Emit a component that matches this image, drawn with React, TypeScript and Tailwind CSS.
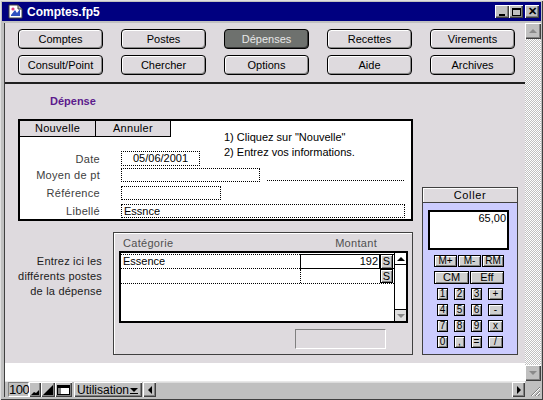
import React from 'react'

const navTop = ['Comptes', 'Postes', 'Dépenses', 'Recettes', 'Virements']
const navBottom = ['Consult/Point', 'Chercher', 'Options', 'Aide', 'Archives']

const raised = 'bg-[#c0c0c0] shadow-[inset_1px_1px_0_#ffffff,inset_-1px_-1px_0_#404040,inset_-2px_-2px_0_#808080]'

function NavButton({ label, active }: { label: string; active?: boolean }) {
  return (
    <div
      className={`h-[20px] rounded-[4px] border border-black flex items-center justify-center text-[11px] ${
        active
          ? 'bg-[#6e716e] text-[#e8e8e8] shadow-[inset_-1px_-1px_0_#383838]'
          : 'bg-[#dedade] text-black shadow-[inset_1px_1px_0_#ffffff,inset_-1px_-1px_0_#8a8a8a]'
      }`}
    >
      {label}
    </div>
  )
}

function Field({ label, children, className = '' }: { label: string; children: React.ReactNode; className?: string }) {
  return (
    <div className={`flex items-center ${className}`}>
      <div className="w-[80px] text-right text-[#404040] tracking-[0.3px] leading-[14px]">{label}</div>
      <div className="ml-[21px] flex items-center">{children}</div>
    </div>
  )
}

function CalcKey({ label, className = '' }: { label: string; className?: string }) {
  return (
    <div
      className={`h-[12px] border border-black bg-[#d0d0d0] shadow-[inset_1px_1px_0_#ffffff,inset_-1px_-1px_0_#808080] flex items-center justify-center text-[10px] leading-none ${className}`}
    >
      {label}
    </div>
  )
}

function Tri({ dir, color = '#000', size = 7 }: { dir: 'up' | 'down' | 'left' | 'right'; color?: string; size?: number }) {
  const pts = {
    up: '0,6 6,0 12,6',
    down: '0,0 12,0 6,6',
    left: '6,0 6,12 0,6',
    right: '0,0 0,12 6,6',
  }[dir]
  const vb = dir === 'up' || dir === 'down' ? '0 0 12 6' : '0 0 6 12'
  const w = dir === 'up' || dir === 'down' ? size : size / 2
  const h = dir === 'up' || dir === 'down' ? size / 2 : size
  return (
    <svg width={w} height={h} viewBox={vb}>
      <polygon points={pts} fill={color} />
    </svg>
  )
}

function TitleIcon() {
  return (
    <svg width="16" height="15" viewBox="0 0 16 15">
      <path d="M1 1h9l4 4v9H1z" fill="#fff" stroke="#404040" strokeWidth="1" />
      <path d="M10 1v4h4" fill="#c0c0c0" stroke="#404040" strokeWidth="1" />
      <path d="M3 11l4-5 2 3 3-4v7H3z" fill="#3050c0" />
      <circle cx="5" cy="5" r="1.6" fill="#e04080" />
    </svg>
  )
}

function WinButton({ children }: { children: React.ReactNode }) {
  return <div className={`w-[14px] h-[13px] ${raised} flex items-center justify-center`}>{children}</div>
}

export default function App() {
  return (
    <div className="w-[543px] h-[400px] bg-[#c0c0c0] shadow-[inset_1px_1px_0_#e0e0e0,inset_-1px_-1px_0_#404040] px-[2px] pt-[2px] pb-[3px] flex flex-col overflow-hidden font-['Liberation_Sans',Arial,sans-serif] text-[11px] text-black">
      {/* barre de titre */}
      <div className="h-[19px] bg-[#000080] flex items-center pl-[6px] pr-[2px]">
        <TitleIcon />
        <span className="ml-[3px] text-white font-bold text-[12px]">Comptes.fp5</span>
        <div className="ml-auto flex items-center">
          <WinButton>
            <div className="w-[6px] h-[2px] bg-black mt-[6px]" />
          </WinButton>
          <WinButton>
            <div className="w-[9px] h-[8px] border border-black border-t-2" />
          </WinButton>
          <div className="ml-[2px]">
            <WinButton>
              <span className="text-[11px] font-bold leading-none">✕</span>
            </WinButton>
          </div>
        </div>
      </div>

      <div className="mt-[2px] flex-1 flex pl-[2px]">
        <div className="flex-1 flex flex-col border-l border-[#404040]">
          {/* zone grise du modèle */}
          <div className="h-[340px] bg-[#dedade] flex flex-col">
            <div className="mt-[6px] ml-[13px] grid grid-cols-[repeat(5,85px)] gap-x-[18px] gap-y-[6px]">
              {navTop.map((n) => (
                <NavButton key={n} label={n} active={n === 'Dépenses'} />
              ))}
              {navBottom.map((n) => (
                <NavButton key={n} label={n} />
              ))}
            </div>

            <div className="mt-[7px] h-[2px] bg-[#202020]" />

            <div className="mt-[10px] ml-[45px] leading-[14px] font-bold text-[#5c1a8c]">Dépense</div>

            <div className="mt-[11px] ml-[13px] flex">
              {/* colonne gauche */}
              <div className="w-[395px] flex flex-col">
                <div className="h-[102px] border-2 border-black bg-white flex flex-col">
                  <div className="flex">
                    <div className="w-[180px] flex flex-col">
                      <div className="flex h-[16px]">
                        <div className="w-[76px] bg-[#dedade] border-r border-b border-black flex items-center justify-center tracking-[0.3px]">
                          Nouvelle
                        </div>
                        <div className="w-[75px] bg-[#dedade] border-r border-b border-black flex items-center justify-center tracking-[0.3px]">
                          Annuler
                        </div>
                      </div>
                      <Field label="Date" className="mt-[14px]">
                        <div className="w-[79px] h-[15px] border border-dotted border-black flex items-center justify-center leading-none">
                          05/06/2001
                        </div>
                      </Field>
                    </div>
                    <div className="ml-[24px] mt-[9px] leading-[15px]">
                      1) Cliquez sur "Nouvelle"
                      <br />
                      2) Entrez vos informations.
                    </div>
                  </div>
                  <Field label="Moyen de pt" className="mt-[2px]">
                    <div className="w-[139px] h-[14px] border border-dotted border-black" />
                    <div className="ml-[7px] w-[137px] h-[11px] border-b border-dotted border-black" />
                  </Field>
                  <Field label="Référence" className="mt-[4px]">
                    <div className="w-[100px] h-[14px] border border-dotted border-black" />
                  </Field>
                  <Field label="Libellé" className="mt-[4px]">
                    <div className="w-[284px] h-[14px] border border-dotted border-black pl-[2px] flex items-center leading-none">
                      Essnce
                    </div>
                  </Field>
                </div>

                <div className="mt-[11px] flex">
                  <div className="w-[84px] mt-[22px] text-right leading-[15px] tracking-[0.2px] text-[#202020]">
                    Entrez ici les
                    <br />
                    différents postes
                    <br />
                    de la dépense
                  </div>
                  <div className="ml-[11px] w-[300px] h-[123px] border border-[#404040] shadow-[inset_1px_1px_0_#ffffff] flex flex-col">
                    <div className="mt-[4px] h-[13px] pl-[9px] pr-[35px] flex items-center justify-between text-[#505050] tracking-[0.3px]">
                      <span>Catégorie</span>
                      <span>Montant</span>
                    </div>
                    <div className="mt-[1px] ml-[5px] w-[289px] h-[72px] border-2 border-black bg-white flex">
                      <div className="flex-1 flex flex-col pt-[1px]">
                        <div className="h-[15px] flex border-y border-dotted border-black">
                          <div className="w-[179px] pl-[2px] flex items-center leading-none">Essence</div>
                          <div className="w-[80px] border border-black -my-px flex items-center justify-end pr-[1px] leading-none">
                            192
                          </div>
                          <div className="w-[13px] -my-px">
                            <CalcKey label="S" className="h-[15px] text-[11px]" />
                          </div>
                        </div>
                        <div className="h-[15px] flex border-b border-dotted border-black">
                          <div className="w-[179px]" />
                          <div className="w-[80px] border-l border-dotted border-black" />
                          <div className="w-[13px]">
                            <CalcKey label="S" className="h-[14px] text-[11px]" />
                          </div>
                        </div>
                      </div>
                      <div className="w-[12px] border-l border-black flex flex-col justify-between">
                        <div className="h-[12px] border-b border-black flex items-center justify-center">
                          <Tri dir="up" size={8} />
                        </div>
                        <div className="h-[12px] border-t border-black bg-[#e0e0e0] flex items-center justify-center">
                          <Tri dir="down" size={8} color="#8a8a8a" />
                        </div>
                      </div>
                    </div>
                    <div className="mt-[6px] ml-[181px] w-[91px] h-[20px] border-t border-l border-[#808080] border-b border-r border-b-white border-r-white" />
                  </div>
                </div>
              </div>

              {/* calculatrice */}
              <div className="ml-[9px] mt-[68px] w-[96px] flex flex-col">
                <div className="h-[15px] bg-[#dedade] border border-b-0 border-[#404040] shadow-[inset_1px_1px_0_#ffffff] flex items-center justify-center tracking-[0.6px]">
                  Coller
                </div>
                <div className="h-[153px] bg-[#ccccff] border border-[#404040] flex flex-col">
                  <div className="mt-[7px] ml-[5px] w-[81px] h-[40px] border-2 border-black bg-white text-right pr-[1px] leading-[13px]">
                    65,00
                  </div>
                  <div className="mt-[5px] ml-[11px] flex gap-[1px]">
                    <CalcKey label="M+" className="w-[23px]" />
                    <CalcKey label="M-" className="w-[23px]" />
                    <CalcKey label="RM" className="w-[22px]" />
                  </div>
                  <div className="mt-[4px] ml-[11px] flex gap-[1px]">
                    <CalcKey label="CM" className="w-[35px] h-[13px] text-[11px]" />
                    <CalcKey label="Eff" className="w-[34px] h-[13px] text-[11px]" />
                  </div>
                  <div className="mt-[4px] ml-[14px] grid grid-cols-[11px_11px_11px_15px] gap-x-[6px] gap-y-[4px]">
                    {['1', '2', '3', '+', '4', '5', '6', '-', '7', '8', '9', 'x', '0', ',', '=', '/'].map((k) => (
                      <CalcKey key={k} label={k} />
                    ))}
                  </div>
                </div>
              </div>
            </div>
          </div>

          <div className="h-[18px] bg-white" />

          {/* barre d'état */}
          <div className="h-[16px] bg-[#c0c0c0] shadow-[inset_0_1px_0_#e8e8e8] flex items-stretch pl-[3px] pt-[1px]">
            <div className="w-[21px] border-t border-l border-[#808080] border-b border-r border-b-white border-r-white text-[13px] leading-[13px] tracking-[-0.5px] flex items-center">
              100
            </div>
            <div className={`w-[12px] ${raised} flex items-end justify-center pb-[2px]`}>
              <svg width="8" height="5" viewBox="0 0 8 5">
                <polygon points="0,5 3,2 5,3 8,0 8,5" fill="#000" />
              </svg>
            </div>
            <div className={`w-[14px] ${raised} flex items-end justify-center pb-[2px]`}>
              <svg width="10" height="10" viewBox="0 0 10 10">
                <polygon points="0,10 10,0 10,10" fill="#000" />
              </svg>
            </div>
            <div className={`w-[17px] ${raised} flex items-center justify-center`}>
              <svg width="13" height="10" viewBox="0 0 13 10">
                <rect x="0.5" y="0.5" width="12" height="9" fill="#fff" stroke="#000" />
                <rect x="1" y="1" width="11" height="2" fill="#000" />
                <rect x="1" y="3" width="3" height="6" fill="#808080" />
              </svg>
            </div>
            <div className={`ml-[2px] w-[68px] ${raised} flex items-center pl-[3px] pr-[4px] text-[12px] leading-none`}>
              <span>Utilisation</span>
              <span className="ml-auto flex flex-col items-center gap-[1px] mt-[3px]">
                <Tri dir="down" size={8} />
                <span className="w-[8px] h-px bg-black" />
              </span>
            </div>
            <div className={`ml-[1px] w-[13px] ${raised} flex items-center justify-center`}>
              <Tri dir="left" size={8} />
            </div>
            <div className="flex-1 bg-[#c0c0c0] shadow-[inset_0_1px_0_#dcdcdc]" />
            <div className={`w-[13px] ${raised} flex items-center justify-center`}>
              <Tri dir="right" size={8} />
            </div>
          </div>
        </div>

        {/* barre de défilement verticale */}
        <div className="w-[16px] flex flex-col">
          <div className="flex-1 flex flex-col">
            <div className={`h-[16px] ${raised} flex items-center justify-center`}>
              <Tri dir="up" size={8} color="#8a8a8a" />
            </div>
            <div className="flex-1 bg-[repeating-conic-gradient(#c0c0c0_0_25%,#ffffff_0_50%)] bg-size-[2px_2px]" />
            <div className={`h-[16px] ${raised} flex items-center justify-center`}>
              <Tri dir="down" size={8} color="#8a8a8a" />
            </div>
          </div>
          <div className="h-[16px] bg-[#c0c0c0] flex items-end justify-end">
            <svg width="12" height="12" viewBox="0 0 12 12">
              <path d="M11 2L2 11M11 6L6 11M11 9L9 11" stroke="#808080" strokeWidth="1" />
              <path d="M11 3L3 11M11 7L7 11" stroke="#ffffff" strokeWidth="1" />
            </svg>
          </div>
        </div>
      </div>
    </div>
  )
}
